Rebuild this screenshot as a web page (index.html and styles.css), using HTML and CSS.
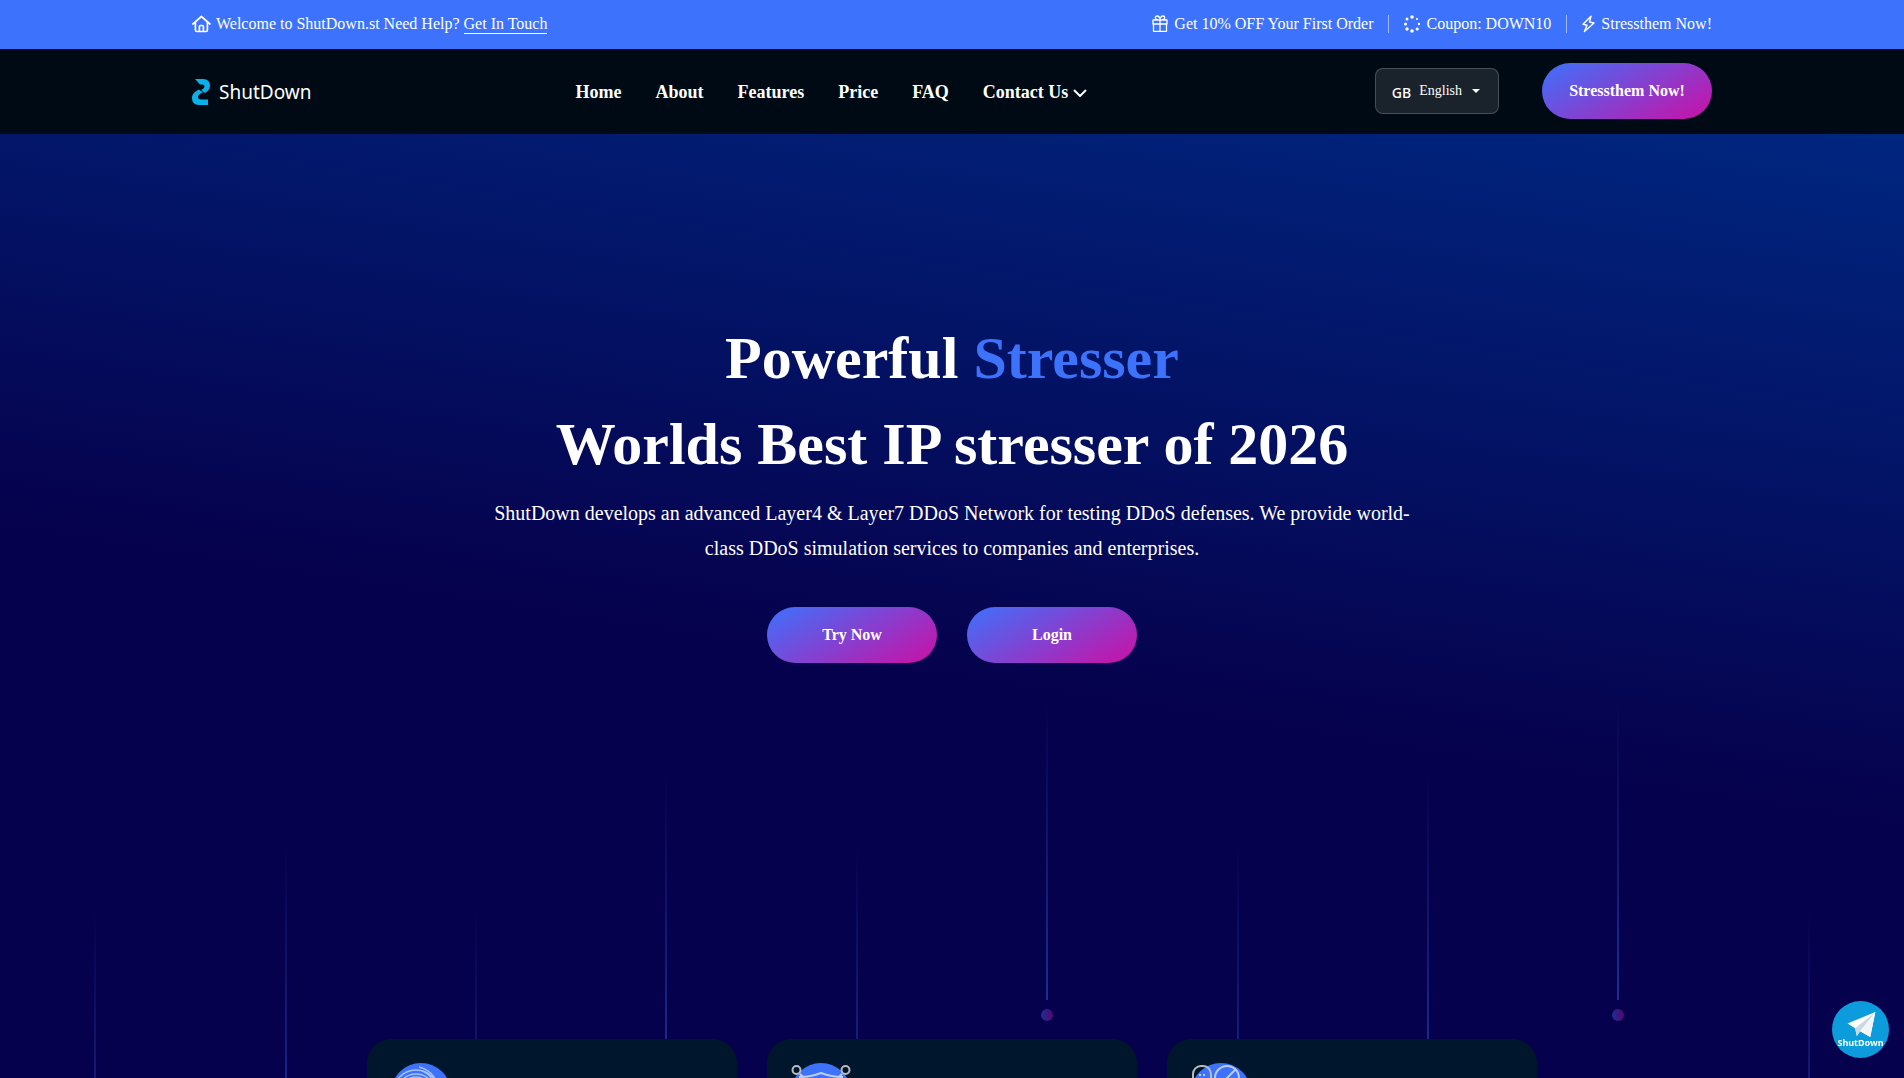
FILE: index.html
```html
<!DOCTYPE html>
<html lang="en">
<head>
  <meta charset="UTF-8">
  <meta name="viewport" content="width=device-width, initial-scale=1.0">
  <title>ShutDown</title>
  <link rel="stylesheet" href="styles.css">
</head>
<body>

  <!-- Top bar -->
  <div class="topbar">
    <div class="container topbar-inner">
      <p class="welcome">
        <svg class="icon" width="20" height="18" viewBox="0 0 20 18" fill="none" stroke="currentColor" stroke-width="1.700" stroke-linecap="round" stroke-linejoin="round"><path d="M.900 9 9.400 1.500 17.900 9M3.400 7.500V15a1.500 1.500 0 0 0 1.500 1.500h9a1.500 1.500 0 0 0 1.500-1.500V7.500M7.400 16v-4.500a1 1 0 0 1 1-1h2a1 1 0 0 1 1 1V16"/></svg>
        <span>Welcome to ShutDown.st Need Help? <a class="touch" href="#contact">Get In Touch</a></span>
      </p>
      <ul class="offers">
        <li>
          <svg class="icon" width="16" height="18" viewBox="0 0 16 18" fill="none" stroke="currentColor" stroke-width="1.300" stroke-linejoin="round"><path d="M1 5h14v4H1zM1.500 9v7.300h13V9M8 5v11M8 5C5 5 3.300 4 3.300 2.700 3.300 1.500 4.200 1 5 1c1.700 0 3 1.700 3 4 0-2.300 1.300-4 3-4 .8 0 1.700.5 1.700 1.700C12.700 4 11 5 8 5"/></svg>
          Get 10% OFF Your First Order
        </li>
        <li>
          <svg class="icon" width="16" height="18" viewBox="0 0 16 18" fill="currentColor"><circle cx="8" cy="2" r="1.800"/><circle cx="13" cy="4" r="1.100"/><circle cx="15" cy="9" r="1.200"/><circle cx="13.200" cy="14" r="1.600"/><circle cx="8" cy="16" r="1.800"/><circle cx="3" cy="14" r="1.700"/><circle cx="1.500" cy="9" r="1.500"/><circle cx="3" cy="4" r="1.500"/></svg>
          Coupon: DOWN10
        </li>
        <li>
          <svg class="icon" width="13" height="18" viewBox="0 0 13 18" fill="none" stroke="currentColor" stroke-width="1.400" stroke-linejoin="round"><path d="M9 1.200 1 9.300l4 1-2.600 6.300L12 8 7.500 7z"/></svg>
          Stressthem Now!
        </li>
      </ul>
    </div>
  </div>

  <!-- Header -->
  <header class="header">
    <div class="container header-inner">
      <a class="logo" href="#">
        <svg width="18" height="26" viewBox="0 0 18 26" fill="#0ab0e8"><path d="M3 0h8c5 0 7 3 7 7 0 3-2 5-5 7l-4-3c2-1 3.500-2 3.500-3.500S11 5.500 9.500 5.500H8z"/><path d="M7 10.500l4 3c-3 1-5 2.500-5 4.500 0 1.500 1 2.500 3 2.500h7V26H7c-5 0-7-3-7-7 0-4 3-6.500 7-8.500z"/></svg>
        ShutDown
      </a>
      <nav class="nav">
        <a href="#home">Home</a>
        <a href="#about">About</a>
        <a href="#features">Features</a>
        <a href="#price">Price</a>
        <a href="#faq">FAQ</a>
        <a href="#contact">Contact Us <svg width="14" height="9" viewBox="0 0 14 9" fill="none" stroke="currentColor" stroke-width="2" stroke-linecap="round" stroke-linejoin="round"><path d="M1.500 1.500 7 7l5.500-5.500"/></svg></a>
      </nav>
      <div class="header-right">
        <button type="button" class="language"><span class="flag">GB</span> English <span class="caret"></span></button>
        <a class="btn" href="#">Stressthem Now!</a>
      </div>
    </div>
  </header>

  <!-- Hero -->
  <main class="hero">
    <div class="lines">
      <span class="line low"></span>
      <span class="line mid"></span>
      <span class="line low"></span>
      <span class="line high"></span>
      <span class="line mid"></span>
      <span class="line top"></span>
      <span class="line mid"></span>
      <span class="line high"></span>
      <span class="line top"></span>
      <span class="line low"></span>
    </div>

    <div class="hero-content">
      <h1>Powerful <span>Stresser</span><br>Worlds Best IP stresser of 2026</h1>
      <p>ShutDown develops an advanced Layer4 &amp; Layer7 DDoS Network for testing DDoS defenses. We provide world-class DDoS simulation services to companies and enterprises.</p>
      <div class="hero-buttons">
        <a class="btn" href="#">Try Now</a>
        <a class="btn" href="#">Login</a>
      </div>
    </div>

    <div class="cards" id="features">
      <div class="card">
        <svg width="60" height="60" viewBox="0 0 60 60" fill="none" stroke="#a9c1ff" stroke-width="1.500"><circle cx="30" cy="30" r="30" fill="#3c72fc" stroke="none"/><circle cx="25" cy="30" r="23"/><circle cx="25" cy="30" r="19"/><circle cx="25" cy="30" r="16"/><path d="M28 4c9 2 16 9 19 18M32 8c6 3 9 7 11 12"/></svg>
      </div>
      <div class="card">
        <svg width="60" height="60" viewBox="0 0 60 60" fill="none" stroke="#bccdfd" stroke-width="2"><circle cx="30" cy="30" r="30" fill="#3c72fc" stroke="none"/><circle cx="5.500" cy="7" r="4" stroke="#bbb"/><circle cx="54.500" cy="7" r="4" stroke="#bbb"/><path d="M9 11l4 4M51 11l-4 4M9 14c8 0 13-1 21-4 8 3 13 4 21 4v16c0 12-9 19-21 24C18 49 9 42 9 30z"/></svg>
      </div>
      <div class="card">
        <svg width="60" height="60" viewBox="0 0 60 60" fill="none" stroke="#bccdfd" stroke-width="2"><circle cx="30" cy="30" r="30" fill="#3c72fc" stroke="none"/><path d="M2 21v-10a8 8 0 0 1 8-8h2c5 0 8 4 8 9v9z" stroke="#bbb"/><path d="M8 12h2M12 12h2"/><circle cx="36" cy="15" r="12"/><path d="M45 6 27 24"/></svg>
      </div>
    </div>
  </main>

  <a class="telegram" href="#" aria-label="Telegram">
    <svg width="32" height="26" viewBox="0 0 38 27" preserveAspectRatio="none"><path d="M3 12 36 0 30 26 18 20l-4 5-2-8z" fill="#fff"/><path d="M12 17 36 0 18 20l-4 5z" fill="#c9d9e4"/><path d="M36 0 18 20l12 6z" fill="#f2f6f9"/></svg>
    <span>ShutDown</span>
  </a>

</body>
</html>
```
FILE: styles.css
```css
* {
  box-sizing: border-box;
}

body {
  margin: 0;
  font-family: "Liberation Serif", "Times New Roman", serif;
  font-size: 16px;
  color: #fff;
  background-color: #06014c;
}

a {
  color: inherit;
  text-decoration: none;
}

.container {
  max-width: 1544px;
  margin: 0 auto;
  padding: 0 12px;
}

/* Top bar */
.topbar {
  background-color: #3c72fc;
}

.topbar-inner {
  display: flex;
  justify-content: space-between;
  align-items: center;
  height: 49px;
  padding-bottom: 2px;
}

.icon {
  flex-shrink: 0;
}

.welcome {
  display: flex;
  align-items: center;
  gap: 4px;
  margin: 0;
}

.touch {
  padding-bottom: 1px;
  border-bottom: 1px solid #fff;
}

.offers {
  display: flex;
  align-items: center;
  margin: 0;
  padding: 0;
  list-style: none;
}

.offers li {
  display: flex;
  align-items: center;
  gap: 6px;
}

.offers li + li {
  margin-left: 15px;
  padding-left: 15px;
  border-left: 1px solid rgba(255, 255, 255, 0.5);
}

/* Header */
.header {
  background-color: #000a14;
}

.header-inner {
  display: flex;
  justify-content: space-between;
  align-items: center;
  height: 85px;
}

.logo {
  display: flex;
  align-items: center;
  gap: 9px;
  padding-top: 1px;
  font-family: "Noto Sans", sans-serif;
  font-size: 19px;
}

.nav {
  display: flex;
  gap: 34px;
  margin-right: 24px;
  padding-top: 1px;
  font-size: 18px;
  font-weight: bold;
}

.header-right {
  display: flex;
  align-items: center;
  gap: 43px;
  padding-bottom: 2px;
}

.language {
  display: flex;
  align-items: center;
  gap: 8px;
  height: 46px;
  padding: 0 18px 0 16px;
  font-family: inherit;
  font-size: 14px;
  color: #fff;
  background-color: rgba(255, 255, 255, 0.1);
  border: 1px solid rgba(255, 255, 255, 0.2);
  border-radius: 8px;
  cursor: pointer;
}

.flag {
  padding-top: 3px;
  font-family: "Noto Sans", sans-serif;
  font-weight: 500;
}

.caret {
  margin-left: 2px;
  border: 4px solid transparent;
  border-top-color: #fff;
  border-bottom: 0;
}

.btn {
  display: flex;
  justify-content: center;
  align-items: center;
  width: 170px;
  height: 56px;
  font-size: 16px;
  font-weight: bold;
  background: linear-gradient(150deg, #3c72fc, #cc0fa5);
  border-radius: 28px;
}

.btn:hover {
  opacity: 0.9;
}

/* Hero */
.hero {
  position: relative;
  min-height: calc(100vh - 134px);
  overflow: hidden;
  background: linear-gradient(189deg, #002680, #06014c 690px);
}

.hero-content {
  max-width: 940px;
  margin: 0 auto;
  padding-top: 181px;
  text-align: center;
}

.hero-content h1 {
  margin: 0;
  font-size: 60px;
  line-height: 86px;
}

.hero-content h1 span {
  color: #3c72fc;
}

.hero-content p {
  margin: 9px 0 41px;
  font-size: 20px;
  line-height: 35px;
}

.hero-buttons {
  display: flex;
  justify-content: center;
  gap: 30px;
}

/* Falling lines behind the hero */
.lines {
  position: absolute;
  inset: 0;
  display: grid;
  grid-template-columns: repeat(10, 1fr);
  justify-items: center;
}

.line {
  position: relative;
  width: 2px;
  height: 300px;
  background: linear-gradient(to bottom, transparent, #3c72fc);
  opacity: 0.4;
}

.line::after {
  content: "";
  position: absolute;
  top: 309px;
  left: -5px;
  width: 12px;
  height: 12px;
  background: linear-gradient(to right, #3c72fc, #cc0fa5);
  border-radius: 50%;
}

.line.top {
  margin-top: 566px;
}

.line.high {
  margin-top: 640px;
}

.line.mid {
  margin-top: 710px;
}

.line.low {
  margin-top: 776px;
}

.hero-content,
.cards {
  position: relative;
}

.cards {
  display: grid;
  grid-template-columns: repeat(3, 1fr);
  gap: 30px;
  max-width: 1170px;
  height: 39px;
  margin: 376px auto 0;
}

.card {
  height: 260px;
  padding: 24px;
  background-color: #00162c;
  border-radius: 24px;
}

.card svg {
  overflow: visible;
}

/* Telegram button */
.telegram {
  position: fixed;
  right: 15px;
  bottom: 20px;
  display: flex;
  flex-direction: column;
  align-items: center;
  width: 57px;
  height: 57px;
  padding-top: 11px;
  font-family: "Noto Sans", sans-serif;
  font-size: 9px;
  font-weight: bold;
  line-height: 10px;
  background-color: #0c9bdb;
  border-radius: 50%;
}
```
